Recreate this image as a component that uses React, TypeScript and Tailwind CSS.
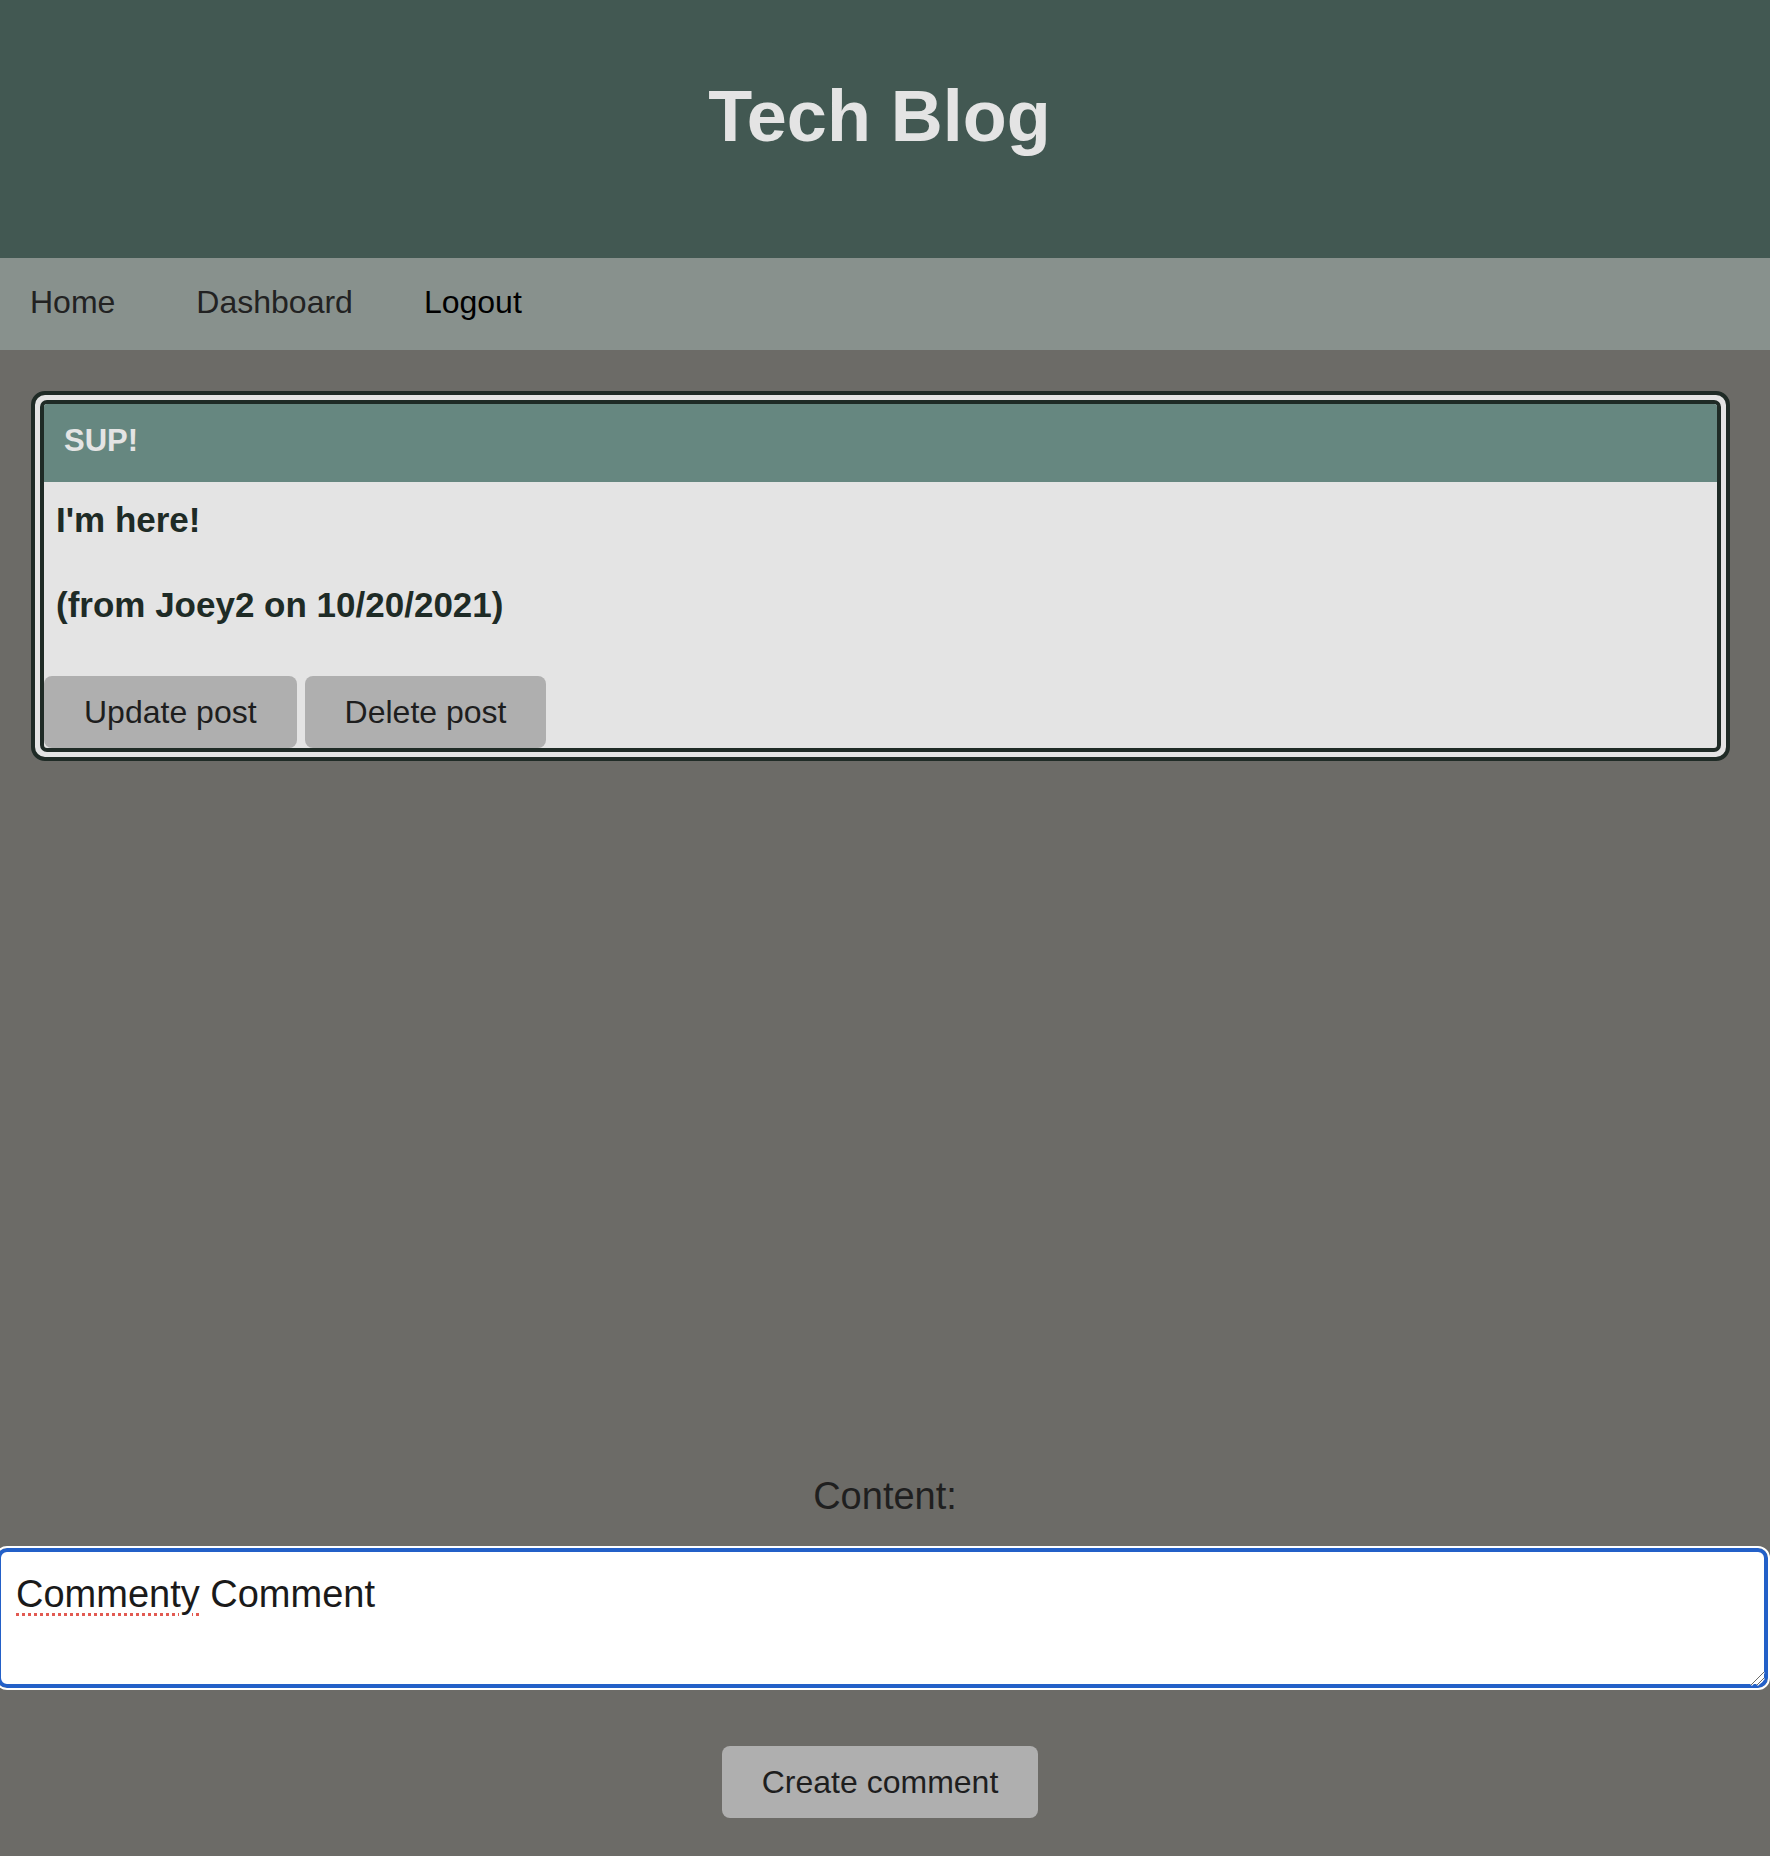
export default function App() {
  return (
    <div className="min-h-screen overflow-hidden bg-[#6c6b67] font-['Liberation_Sans',Arial,sans-serif]">
      <header className="h-[258px] bg-[#425852] pr-[11px] pt-[75px] text-center">
        <h1 className="text-[72px] font-bold leading-[83px] text-[#e4e4e4]">Tech Blog</h1>
      </header>
      <nav className="flex h-[92px] bg-[#88918d] pt-[26px] text-[32px] leading-[37px]">
        <a className="ml-[30px] text-[#222222]">Home</a>
        <a className="ml-[81px] text-[#222222]">Dashboard</a>
        <a className="ml-[71px] text-black">Logout</a>
      </nav>
      <main>
        <div className="ml-[31px] mt-[41px] w-[1699px] rounded-[14px] border-[4px] border-[#1f2b26] bg-[#e4e4e4] p-[5px]">
          <div className="overflow-hidden rounded-[7px] border-[4px] border-[#1f2b26] bg-[#e4e4e4]">
            <div className="h-[78px] bg-[#668780] pl-[20px] pt-[19px] text-[31px] font-bold leading-[36px] text-[#e4e4e4]">
              SUP!
            </div>
            <div className="flex h-[266px] flex-col pt-[18px]">
              <p className="pl-[12px] text-[35px] font-bold leading-[40px] text-[#1e2b26]">I'm here!</p>
              <p className="mt-[45px] pl-[12px] text-[35px] font-bold leading-[40px] text-[#1e2b26]">
                (from Joey2 on 10/20/2021)
              </p>
              <div className="mt-auto flex gap-[8px]">
                <button className="h-[72px] rounded-[8px] bg-[#afafaf] px-[40px] text-[32px] leading-[37px] text-[#1e1e1e]">
                  Update post
                </button>
                <button className="h-[72px] rounded-[8px] bg-[#afafaf] px-[40px] text-[32px] leading-[37px] text-[#1e1e1e]">
                  Delete post
                </button>
              </div>
            </div>
          </div>
        </div>

        <div className="mt-[713px] text-center text-[38px] leading-[44px] text-[#1f1f1f]">Content:</div>

        <div className="relative ml-[-3px] mt-[30px] h-[140px] w-[1771px] rounded-[10px] border-[4px] border-[#2360c8] bg-white pl-[15px] pt-[20px] text-[38px] leading-[44px] text-[#1a1a1a] outline-2 outline-white">
          <span className="underline decoration-[#e25a52] decoration-dotted decoration-[3px] underline-offset-[6px]">Commenty</span>{" "}
          Comment
          <svg className="absolute bottom-[-3px] right-[-2px] h-[18px] w-[18px]" viewBox="0 0 18 18">
            <line x1="3" y1="16" x2="16" y2="3" stroke="#ffffff" strokeWidth="2.5" />
            <line x1="3" y1="16" x2="16" y2="3" stroke="#6a6a6a" strokeWidth="1" />
            <line x1="9" y1="16" x2="16" y2="9" stroke="#ffffff" strokeWidth="2.5" />
            <line x1="9" y1="16" x2="16" y2="9" stroke="#6a6a6a" strokeWidth="1" />
          </svg>
        </div>

        <div className="mt-[58px] flex justify-center pr-[10px]">
          <button className="h-[72px] rounded-[8px] bg-[#afafaf] px-[40px] text-[32px] leading-[37px] text-[#1e1e1e]">
            Create comment
          </button>
        </div>
      </main>
    </div>
  );
}
